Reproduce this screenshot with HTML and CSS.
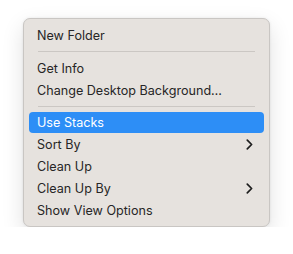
FILE: index.html
```html
<!DOCTYPE html>
<html>
<head>
<meta charset="utf-8">
<link rel="stylesheet" href="styles.css">
</head>
<body>
<div class="menu">
  <div class="item">New Folder</div>
  <div class="sep"></div>
  <div class="item">Get Info</div>
  <div class="item">Change Desktop Background…</div>
  <div class="sep"></div>
  <div class="item active">Use Stacks</div>
  <div class="item">Sort By<svg class="chev" width="7" height="11" viewBox="0 0 7 11"><path d="M1.3 1.2 L5.6 5.5 L1.3 9.8" fill="none" stroke="#1e1e1e" stroke-width="1.7" stroke-linecap="round" stroke-linejoin="round"/></svg></div>
  <div class="item">Clean Up</div>
  <div class="item">Clean Up By<svg class="chev" width="7" height="11" viewBox="0 0 7 11"><path d="M1.3 1.2 L5.6 5.5 L1.3 9.8" fill="none" stroke="#1e1e1e" stroke-width="1.7" stroke-linecap="round" stroke-linejoin="round"/></svg></div>
  <div class="item">Show View Options</div>
</div>
</body>
</html>
```
FILE: styles.css
```css
html, body {
  margin: 0;
  padding: 0;
  background: #ffffff;
}
body {
  padding: 18px 0 0 23px;
  font-family: Inter, "Noto Sans", sans-serif;
}
.menu {
  box-sizing: border-box;
  width: 247px;
  height: 209px;
  padding: 5px;
  background: #e6e2de;
  border: 1px solid #c9c6c3;
  border-radius: 7px;
  box-shadow: 0 8px 22px rgba(0,0,0,0.12), 0 0 3px rgba(0,0,0,0.08);
  display: flex;
  flex-direction: column;
}
.item {
  height: 22px;
  padding: 1px 8px 0 8px;
  box-sizing: border-box;
  display: flex;
  align-items: center;
  justify-content: space-between;
  font-size: 12.6px;
  color: #262626;
  border-radius: 4px;
}
.item.active {
  background: #2d8ef6;
  color: #ffffff;
}
.chev {
  margin-right: 3px;
}
.sep {
  height: 11px;
  display: flex;
  align-items: center;
  padding: 0 9px;
}
.sep::before {
  content: "";
  flex: 1;
  height: 1px;
  background: #cbc7c3;
}
```
